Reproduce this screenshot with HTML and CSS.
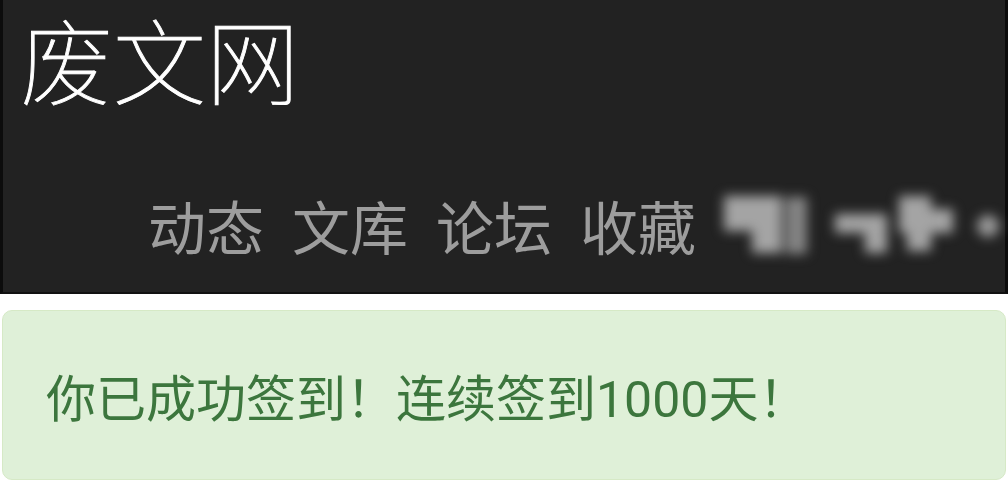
FILE: index.html
```html
<!DOCTYPE html>
<html lang="zh-CN">
<head>
<meta charset="utf-8">
<title>废文网</title>
<link rel="stylesheet" href="styles.css">
</head>
<body>
<header class="navbar">
  <div class="brand">废文网</div>
  <nav class="nav">
    <a class="nav-link">动态</a>
    <a class="nav-link">文库</a>
    <a class="nav-link">论坛</a>
    <a class="nav-link">收藏</a>
    <svg class="blurred" width="290" height="64" viewBox="0 0 290 64" aria-hidden="true">
      <g fill="#a4a4a4">
        <rect x="6" y="3" width="58" height="35"/>
        <rect x="34" y="34" width="30" height="26"/>
        <rect x="68" y="4" width="21" height="57" fill="#858585"/>
        <rect x="117" y="21" width="52" height="19"/>
        <rect x="147" y="36" width="22" height="24"/>
        <rect x="181" y="3" width="32" height="26"/>
        <rect x="181" y="16" width="54" height="24"/>
        <rect x="189" y="36" width="24" height="22"/>
        <circle cx="270" cy="33" r="11" fill="#999999"/>
      </g>
    </svg>
  </nav>
</header>
<div class="alert">你已成功签到！连续签到1000天！</div>
</body>
</html>
```

FILE: styles.css
```css
html, body {
  margin: 0;
  padding: 0;
  background: #ffffff;
  width: 1008px;
  height: 500px;
  overflow: hidden;
}

body {
  font-family: "Noto Sans CJK SC", "Noto Sans", sans-serif;
}

.navbar {
  background: #222222;
  border-left: 3px solid #0c0c0c;
  border-right: 3px solid #0c0c0c;
  border-bottom: 2px solid #111111;
  height: 294px;
  box-sizing: border-box;
  padding: 2px 0 0 17px;
  display: flex;
  flex-direction: column;
}

.brand {
  color: #ffffff;
  font-size: 93px;
  line-height: 1.2;
  font-weight: 100;
  -webkit-text-stroke: 0.9px #ffffff;
}

.nav {
  margin-top: 79px;
  margin-left: 128px;
  display: flex;
  align-items: center;
  gap: 28px;
}

.nav-link {
  color: #9d9d9d;
  font-size: 58px;
  line-height: 1;
  white-space: nowrap;
}

.blurred {
  display: block;
  flex-shrink: 0;
  margin-left: -6px;
  filter: blur(6px);
}

.alert {
  margin: 16px 2px 0 2px;
  height: 170px;
  box-sizing: border-box;
  background: #dff0d8;
  border: 1px solid #d6e9c6;
  border-radius: 10px;
  color: #3c763d;
  font-family: Roboto, "Noto Sans CJK SC", sans-serif;
  font-size: 50px;
  display: flex;
  align-items: center;
  padding: 0 0 0 43px;
  white-space: nowrap;
}
```
